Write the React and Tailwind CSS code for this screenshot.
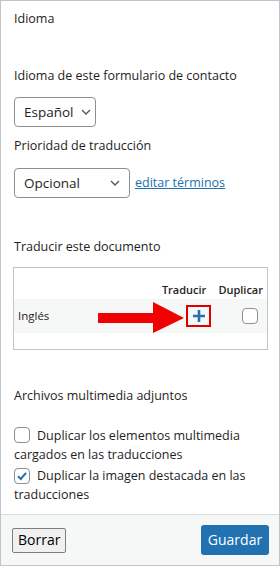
export default function App() {
  const font = { fontFamily: '"Open Sans", "Noto Sans", sans-serif' };
  return (
    <div style={font} className="w-[280px] h-[566px] border border-[#c3c4c7] bg-white flex flex-col text-[#1e1e1e] text-[12.5px]">
      <div className="flex-1 px-[13px] flex flex-col relative">
        <div className="mt-[8px] leading-[20px] font-medium">Idioma</div>
        <div className="mt-[37px] leading-[20px]">Idioma de este formulario de contacto</div>
        <div className="mt-[11px] flex">
          <div className="h-[30px] w-[82px] border border-[#8c8f94] rounded-[4px] flex items-center pl-[9px] gap-[6px] text-[13.5px]">
            <span>Español</span>
            <svg width="12" height="12" viewBox="0 0 12 12"><path d="M2 4l4 4 4-4" fill="none" stroke="#50575e" strokeWidth="1.4" /></svg>
          </div>
        </div>
        <div className="mt-[9px] leading-[20px]">Prioridad de traducción</div>
        <div className="mt-[12px] flex items-center gap-[5px]">
          <div className="h-[30px] w-[116px] border border-[#8c8f94] rounded-[4px] flex items-center justify-between pl-[9px] pr-[8px] text-[13.5px]">
            <span>Opcional</span>
            <svg width="12" height="12" viewBox="0 0 12 12"><path d="M2 4l4 4 4-4" fill="none" stroke="#50575e" strokeWidth="1.4" /></svg>
          </div>
          <span className="text-[#2271b1] underline leading-[20px]">editar términos</span>
        </div>
        <div className="mt-[39px] leading-[20px] font-medium">Traducir este documento</div>
        <div className="mt-[10px] -ml-[1px] w-[255px] h-[83px] border border-[#c3c4c7] flex flex-col">
          <div className="h-[31px] flex items-end justify-end pr-[4px] pb-[1px] gap-[12px] text-[11px] font-semibold leading-[16px]">
            <span>Traducir</span>
            <span>Duplicar</span>
          </div>
          <div className="h-[34px] bg-[#f6f7f7] flex items-center text-[11.5px]">
            <span className="ml-[4px] flex-1">Inglés</span>
            <div className="w-[25px] h-[22px] border-2 border-[#e00000] flex items-center justify-center mr-[31px]">
              <svg width="14" height="14" viewBox="0 0 14 14"><path d="M7 1v12M1 7h12" stroke="#2271b1" strokeWidth="2.6" /></svg>
            </div>
            <div className="w-[16px] h-[16px] border border-[#8c8f94] rounded-[4px] bg-white mr-[9px]"></div>
          </div>
        </div>
        <svg className="absolute left-[97px] top-[301px]" width="87" height="32" viewBox="0 0 87 32">
          <polygon points="0,11 55,11 55,0 86,16 55,31 55,21 0,21" fill="#f00000" />
        </svg>
        <div className="mt-[36px] leading-[20px] font-medium">Archivos multimedia adjuntos</div>
        <div className="mt-[20px] leading-[19px]">
          <span className="inline-block align-[-3px] w-[16px] h-[16px] border border-[#8c8f94] rounded-[4px] mr-[7px]"></span>
          Duplicar los elementos multimedia cargados en las traducciones
        </div>
        <div className="mt-[2px] leading-[19px]">
          <span className="inline-flex items-center justify-center align-[-3px] w-[16px] h-[16px] border border-[#8c8f94] rounded-[4px] mr-[7px]">
            <svg width="14" height="14" viewBox="0 0 14 14"><path d="M3 7.2l2.8 2.8L11 3.8" fill="none" stroke="#2271b1" strokeWidth="2" /></svg>
          </span>
          Duplicar la imagen destacada en las traducciones
        </div>
      </div>
      <div className="h-[51px] border-t border-[#dcdcde] bg-[#f6f7f7] flex items-center justify-between pl-[11px] pr-[10px]">
        <button className="h-[25px] px-[5px] border border-[#7e7e7e] rounded-[2px] bg-[#f0f0f0] text-[14px] text-black leading-none">Borrar</button>
        <button className="h-[30px] w-[68px] rounded-[3px] bg-[#2271b1] text-white text-[14px] leading-none">Guardar</button>
      </div>
    </div>
  );
}
